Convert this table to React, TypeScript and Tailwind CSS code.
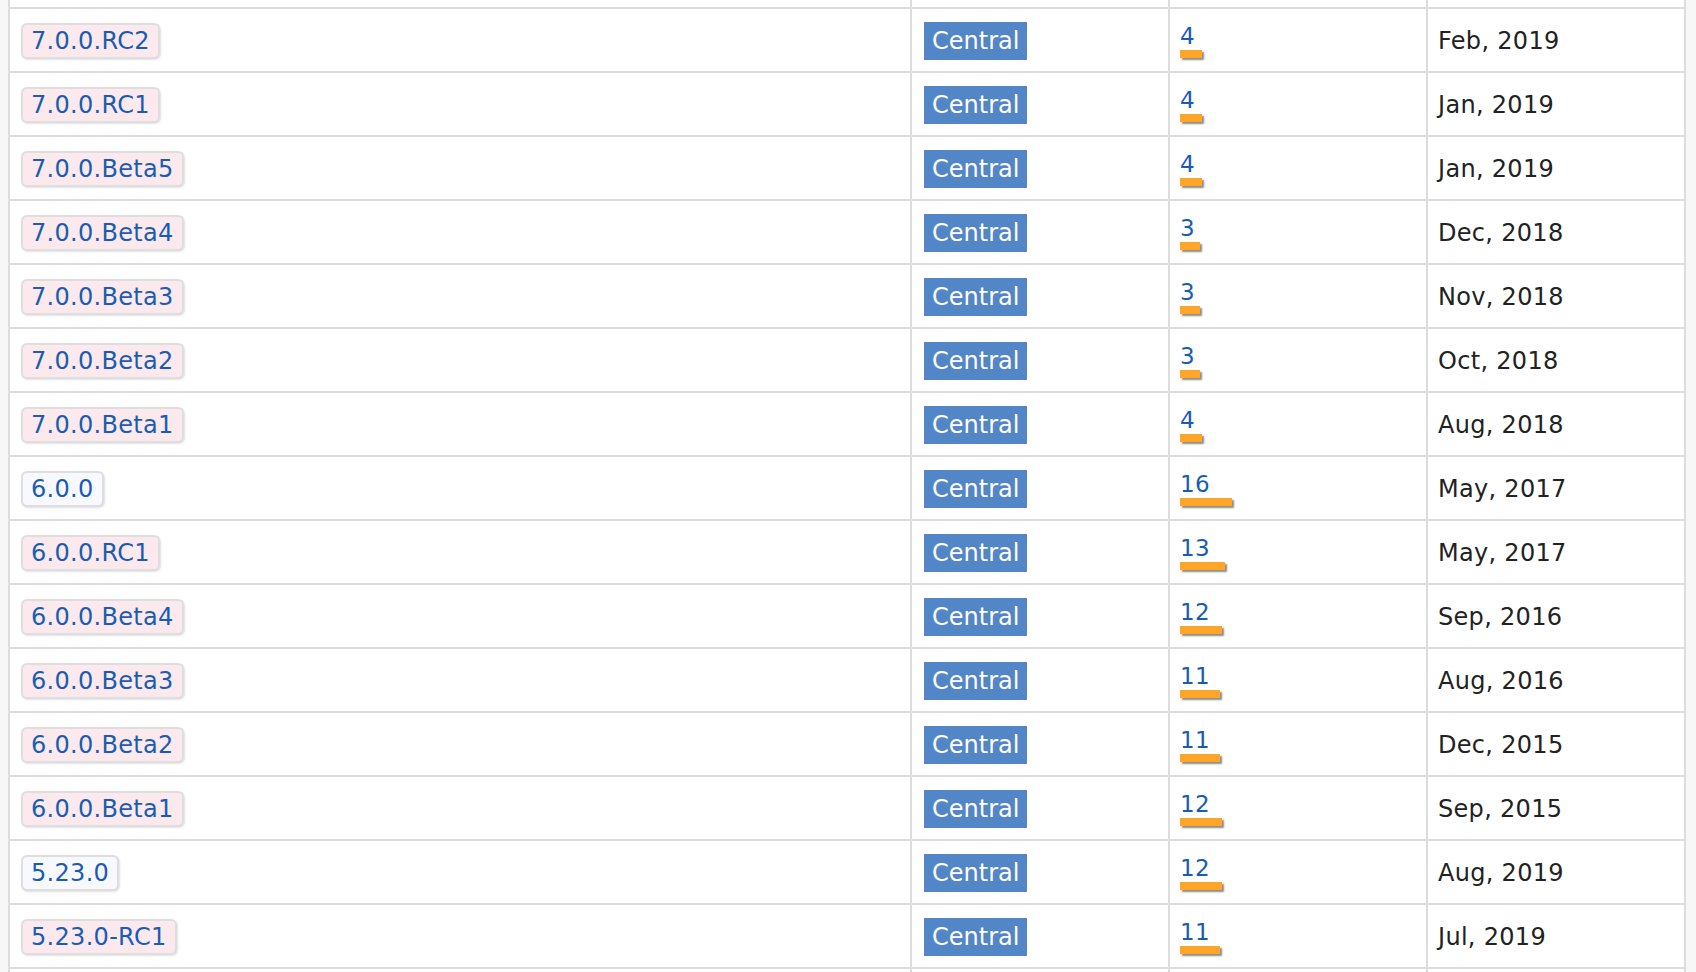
const releases = [
  { version: '7.0.0.RC2', usages: 4, date: 'Feb, 2019' },
  { version: '7.0.0.RC1', usages: 4, date: 'Jan, 2019' },
  { version: '7.0.0.Beta5', usages: 4, date: 'Jan, 2019' },
  { version: '7.0.0.Beta4', usages: 3, date: 'Dec, 2018' },
  { version: '7.0.0.Beta3', usages: 3, date: 'Nov, 2018' },
  { version: '7.0.0.Beta2', usages: 3, date: 'Oct, 2018' },
  { version: '7.0.0.Beta1', usages: 4, date: 'Aug, 2018' },
  { version: '6.0.0', usages: 16, date: 'May, 2017', stable: true },
  { version: '6.0.0.RC1', usages: 13, date: 'May, 2017' },
  { version: '6.0.0.Beta4', usages: 12, date: 'Sep, 2016' },
  { version: '6.0.0.Beta3', usages: 11, date: 'Aug, 2016' },
  { version: '6.0.0.Beta2', usages: 11, date: 'Dec, 2015' },
  { version: '6.0.0.Beta1', usages: 12, date: 'Sep, 2015' },
  { version: '5.23.0', usages: 12, date: 'Aug, 2019', stable: true },
  { version: '5.23.0-RC1', usages: 11, date: 'Jul, 2019' },
];

const rowCls = 'grid grid-cols-[902px_258px_258px_260px] border-b-2 border-[#dddddd]';
const cell = 'border-l-2 border-[#dddddd]';
const lastCell = 'border-l-2 border-r-2 border-[#dddddd]';

const EmptyRow = ({ h, bottom }: { h: string; bottom?: boolean }) => (
  <div
    className={`grid grid-cols-[902px_258px_258px_260px] ${h} ${
      bottom ? 'border-b-2 border-[#dddddd]' : ''
    }`}
  >
    <div className={cell} />
    <div className={cell} />
    <div className={cell} />
    <div className={lastCell} />
  </div>
);

const App = () => {
  return (
    <div
      className="w-[1696px] h-[972px] overflow-hidden bg-[#f7f7f7] pl-[8px]"
      style={{ fontFamily: '"DejaVu Sans", Verdana, sans-serif' }}
    >
      <div className="w-[1678px] bg-white">
        <EmptyRow h="h-[9px]" bottom />
        {releases.map((r) => (
          <div key={r.version} className={`${rowCls} h-[64px]`}>
            <div className={`${cell} flex items-center pl-[11px] pt-[2px]`}>
              <span
                className={`rounded-[6px] border-2 border-[#dedede] px-[8px] py-[2px] text-[24px] leading-[28px] tracking-[0.3px] text-[#1a5cb4] shadow-[1px_1px_2px_rgba(0,0,0,0.12)] ${
                  r.stable ? 'bg-[#f8f9ff]' : 'bg-[#fbe9ee]'
                }`}
              >
                {r.version}
              </span>
            </div>
            <div className={`${cell} flex items-center pl-[12px] pt-[2px]`}>
              <span className="bg-[#5286c6] px-[8px] py-[5px] text-[24px] leading-[28px] text-white">
                Central
              </span>
            </div>
            <div className={`${cell} flex flex-col items-start pl-[10px] pt-[16px]`}>
              <span className="text-[23px] leading-[22px] tracking-[0.3px] text-[#1a5cb4]">{r.usages}</span>
              <span
                className="mt-[3px] h-[8px] bg-[#ffa629] shadow-[2px_2px_2px_#8a8a8a]"
                style={{ width: Math.round(2.5 * r.usages + 12) }}
              />
            </div>
            <div className={`${lastCell} flex items-center pl-[10px] pt-[2px] text-[24px] leading-[28px] tracking-[0.3px] text-[#222222]`}>
              {r.date}
            </div>
          </div>
        ))}
        <EmptyRow h="h-[10px]" />
      </div>
    </div>
  );
};

export default App;
